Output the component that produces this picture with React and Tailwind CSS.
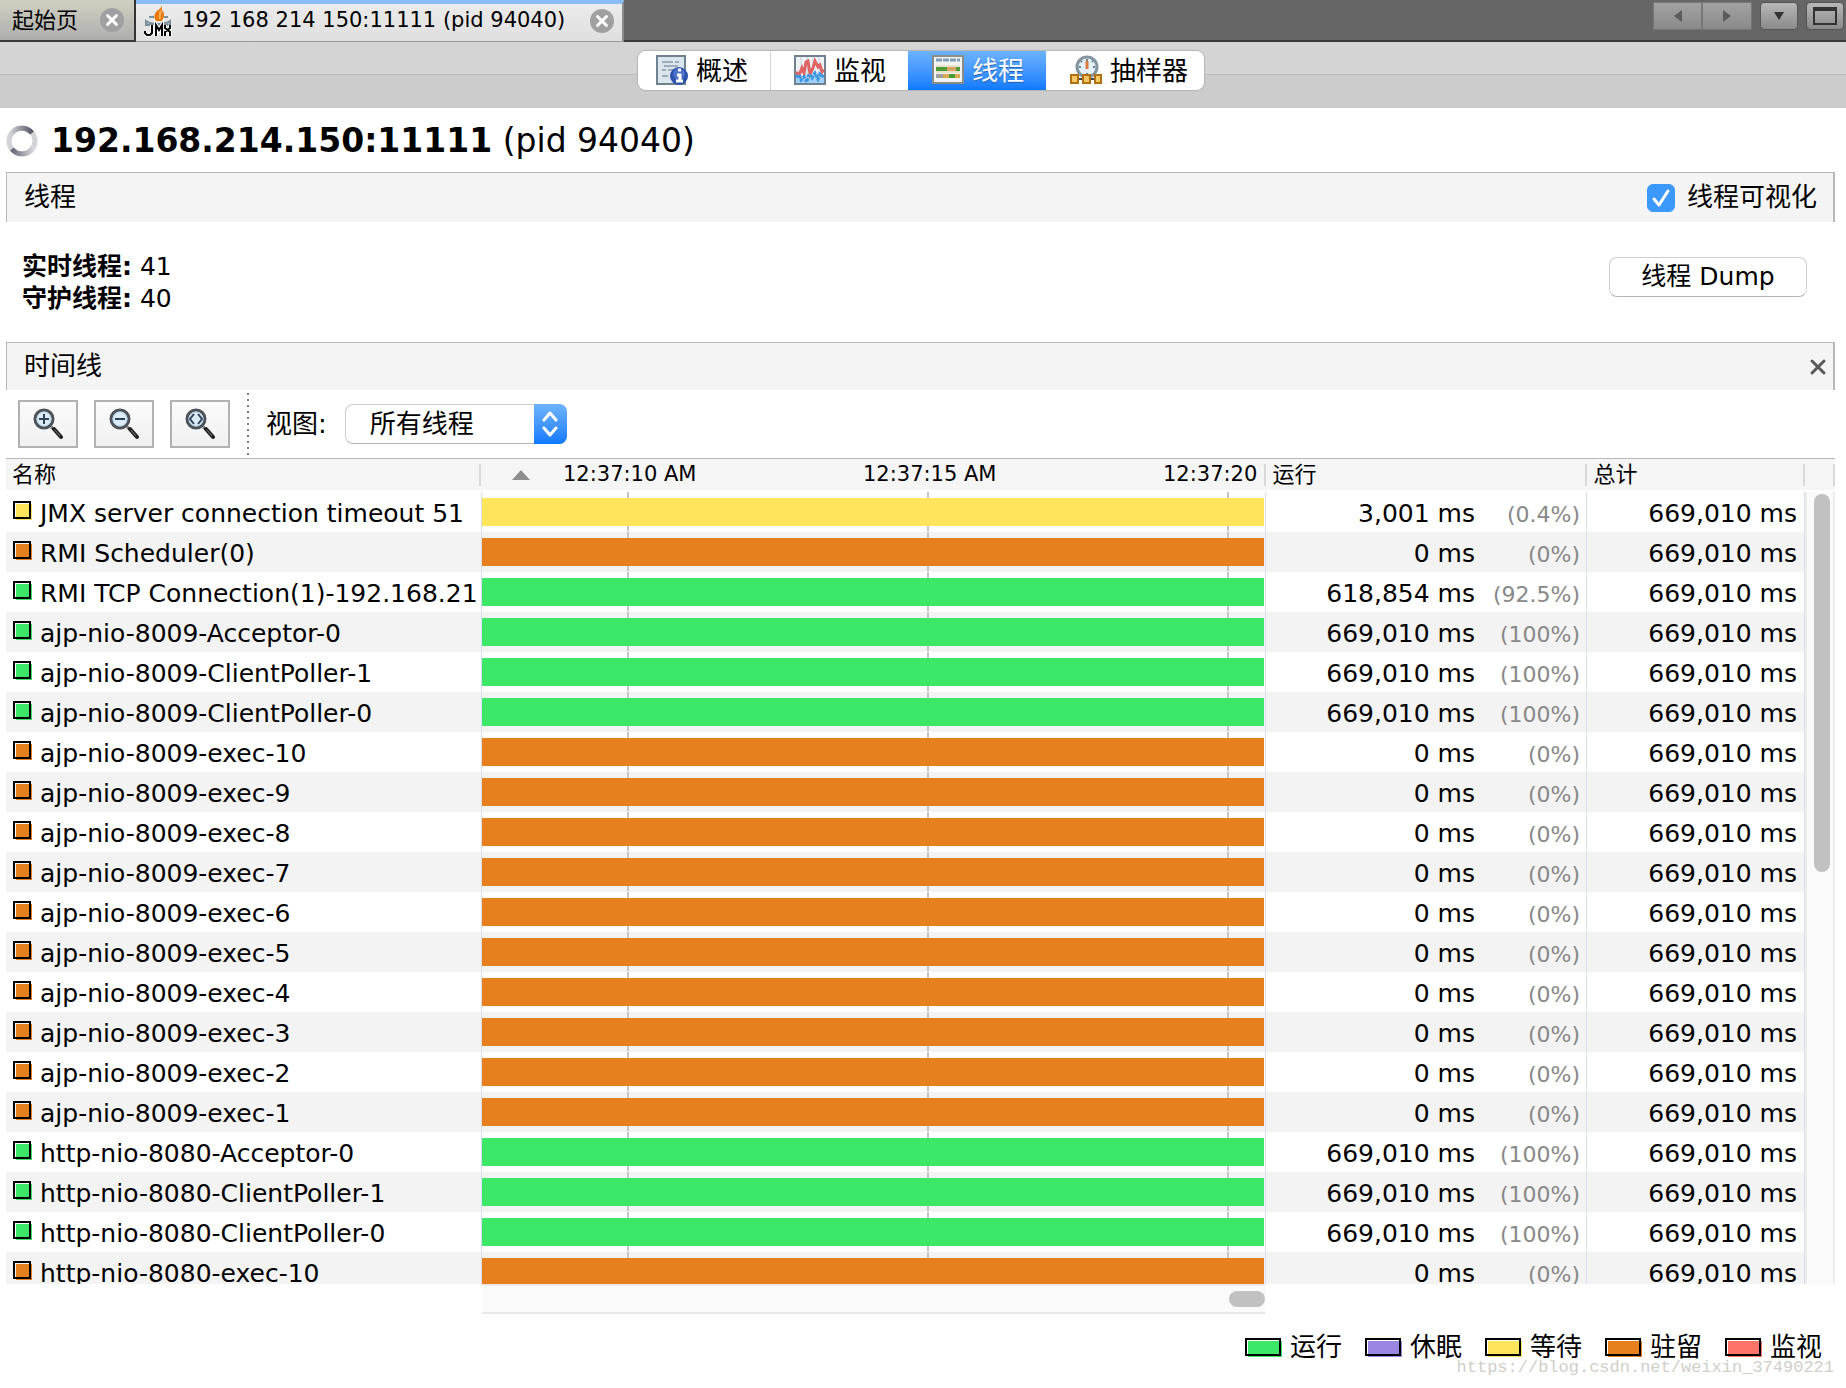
import React, { useState } from 'react';
import { X } from 'lucide-react';

const TOTAL = '669,010 ms';

const STATES = {
  running: { label: '运行', color: '#3ce667' },
  sleeping: { label: '休眠', color: '#9a86e0' },
  wait: { label: '等待', color: '#ffe45c' },
  park: { label: '驻留', color: '#e6801e' },
  monitor: { label: '监视', color: '#ff7369' },
};

const threads = [
  { name: 'JMX server connection timeout 51', state: 'wait', running: '3,001 ms', percent: '(0.4%)' },
  { name: 'RMI Scheduler(0)', state: 'park', running: '0 ms', percent: '(0%)' },
  { name: 'RMI TCP Connection(1)-192.168.21', state: 'running', running: '618,854 ms', percent: '(92.5%)' },
  { name: 'ajp-nio-8009-Acceptor-0', state: 'running', running: TOTAL, percent: '(100%)' },
  { name: 'ajp-nio-8009-ClientPoller-1', state: 'running', running: TOTAL, percent: '(100%)' },
  { name: 'ajp-nio-8009-ClientPoller-0', state: 'running', running: TOTAL, percent: '(100%)' },
  ...[10, 9, 8, 7, 6, 5, 4, 3, 2, 1].map((n) => ({
    name: `ajp-nio-8009-exec-${n}`,
    state: 'park',
    running: '0 ms',
    percent: '(0%)',
  })),
  { name: 'http-nio-8080-Acceptor-0', state: 'running', running: TOTAL, percent: '(100%)' },
  { name: 'http-nio-8080-ClientPoller-1', state: 'running', running: TOTAL, percent: '(100%)' },
  { name: 'http-nio-8080-ClientPoller-0', state: 'running', running: TOTAL, percent: '(100%)' },
  { name: 'http-nio-8080-exec-10', state: 'park', running: '0 ms', percent: '(0%)' },
];

// Coloured box with a shifted fill, used in the table and in the legend
const Swatch = ({ color, width }) => (
  <svg className="shrink-0" width={width + 1} height="19" viewBox={`0 0 ${width + 1} 19`}>
    <rect x="3" y="3" width={width - 2} height="16" fill={color} />
    <rect x="1" y="1" width={width - 2} height="16" fill="none" stroke="#000" strokeWidth="2" />
  </svg>
);

const TabClose = () => (
  <button aria-label="关闭" className="flex size-6 shrink-0 items-center justify-center rounded-full bg-[#a0a0a0]">
    <X size={18} strokeWidth={4} color="#fff" />
  </button>
);

const JmxIcon = () => (
  <svg width="28" height="32" viewBox="0 0 28 32" className="shrink-0">
    <path d="M17 0c1 3-2 4-4 6-3 3-3 5-2 10h7c3-4 2-7 1-11-1 2-1 2-1 3-1-3 1-5-1-8z" fill="#e8780c" />
    <path d="M16 6c1 3-1 5 0 8" stroke="#ffb45b" strokeWidth="2" fill="none" />
    <path d="M5 12h5M20 12h4" stroke="#7b929e" strokeWidth="2" />
    <path d="M2 16c5 4 19 4 24 0v4H2z" stroke="#7b929e" strokeWidth="2" fill="#b8c8d0" />
    <path
      d="M8 20v8l-2 2H3l-2-2v-2M12 31V20l3 5 3-5v11M21 20v3l5 4v4M26 20v3l-5 4v4"
      stroke="#fff" strokeWidth="4" fill="none"
    />
    <path
      d="M8 20v8l-2 2H3l-2-2v-2M12 31V20l3 5 3-5v11M21 20v3l5 4v4M26 20v3l-5 4v4"
      stroke="#000" strokeWidth="2" fill="none"
    />
  </svg>
);

const OverviewIcon = () => (
  <svg width="32" height="32" viewBox="0 0 32 32">
    <rect x="1" y="1" width="28" height="28" fill="#dbe5ee" stroke="#70818f" strokeWidth="2" />
    <path d="M6 7h11M19 7h4M8 11h14M6 15h4M12 15h6M6 21h6" stroke="#9fadba" strokeWidth="2" />
    <circle cx="23" cy="21" r="9" fill="#2c52ae" />
    <circle cx="23" cy="19" r="6" fill="#4a70c8" />
    <path d="M21 20h3v6M20 26h7M22 15h3" stroke="#fff" strokeWidth="3" fill="none" />
  </svg>
);

const MonitorIcon = () => (
  <svg width="32" height="32" viewBox="0 0 32 32">
    <rect x="1" y="1" width="30" height="28" fill="#f0f3f6" stroke="#70818f" strokeWidth="2" />
    <path d="M7 2v26M13 2v26M19 2v26M25 2v26" stroke="#c7d0d8" strokeWidth="1" />
    <path d="M2 20l3-4 3 5 3-3 4 6 4-7 3 3 3-4 5 5v7H2z" fill="#9fd0f8" />
    <path d="M2 17l3 3 3-7 2 5 2-11 2-1 2 13 3-6 2-7 3 6 2-2 2 7 2-2" stroke="#e06464" strokeWidth="3" fill="none" />
    <path d="M2 22l3-2 2 5 3-3 3 5 2-8 3 4 3-5 3 6 2-5 4 3" stroke="#3d94de" strokeWidth="3" strokeDasharray="3 1" fill="none" />
  </svg>
);

const ThreadsIcon = () => (
  <svg width="32" height="32" viewBox="0 0 32 32">
    <rect x="1" y="1" width="30" height="27" fill="#f3f3f3" stroke="#8b8b88" strokeWidth="2" />
    <path d="M4 5h24" stroke="#7f9db5" strokeWidth="3" strokeDasharray="6 1" />
    <path d="M4 14h15M24 14h4" stroke="#4d9a36" strokeWidth="4" />
    <path d="M15 14h9" stroke="#dba263" strokeWidth="4" />
    <path d="M4 11h24M4 17h24" stroke="#d8d3a0" strokeWidth="1" />
    <path d="M4 21h8" stroke="#a0a0a0" strokeWidth="4" />
    <path d="M11 21h6M23 21h5" stroke="#d8a94e" strokeWidth="4" />
    <path d="M17 21h6" stroke="#4d9a36" strokeWidth="4" />
  </svg>
);

const SamplerIcon = () => (
  <svg width="32" height="32" viewBox="0 0 32 32">
    <circle cx="17" cy="12" r="10" fill="#e4f0f8" stroke="#8595a0" strokeWidth="3" />
    <path d="M17 4v2M17 18v2M9 12h2M23 12h2M11 6l1 1M23 6l-1 1" stroke="#6d7f8c" strokeWidth="2" />
    <path d="M17 6v8" stroke="#e07a3c" strokeWidth="3" />
    <path d="M8 24h18" stroke="#444" strokeWidth="2" />
    <g fill="#f5c766" stroke="#b0710e" strokeWidth="2">
      <rect x="1" y="20" width="7" height="8" />
      <rect x="13" y="20" width="7" height="8" />
      <rect x="25" y="20" width="6" height="8" />
    </g>
  </svg>
);

const ZoomIcon = ({ children }) => (
  <svg width="30" height="32" viewBox="0 0 30 32">
    <path d="M18 19l4 3" stroke="#777" strokeWidth="3" />
    <path d="M21 21l7 8" stroke="#222" strokeWidth="4" strokeLinecap="round" />
    <path d="M22 22l5 6" stroke="#777" strokeWidth="1" />
    <circle cx="11" cy="11" r="9" fill="#dcebf8" stroke="#4c5257" strokeWidth="3" />
    <circle cx="11" cy="11" r="7" fill="none" stroke="#b6d3ea" strokeWidth="1" />
    <g stroke="#2e4258" strokeWidth="2" fill="none">{children}</g>
  </svg>
);

const zoomButtons = [
  { label: '放大', icon: <path d="M6 11h10M11 6v10" /> },
  { label: '缩小', icon: <path d="M6 11h10" /> },
  { label: '适合窗口', icon: <path d="M9 6l-4 5 4 5M13 6l4 5-4 5" /> },
];

const views = [
  { id: 'overview', label: '概述', icon: <OverviewIcon />, box: 'w-[132px] pl-[18px] rounded-l-lg' },
  { id: 'monitor', label: '监视', icon: <MonitorIcon />, box: 'w-[138px] pl-[23px] border-l border-[#d4d4d4]' },
  { id: 'threads', label: '线程', icon: <ThreadsIcon />, box: 'w-[138px] pl-6' },
  { id: 'sampler', label: '抽样器', icon: <SamplerIcon />, box: 'w-[158px] pl-6 rounded-r-lg' },
];

const TabBar = () => (
  <div className="flex h-[42px] bg-[#666] border-b-2 border-[#3a3a3a] text-[22px] shrink-0">
    <div className="flex w-[136px] items-center justify-between border-r-2 border-[#333] bg-linear-to-b from-[#d0d0c2] to-[#aeaeae] pl-3 pr-[10px]">
      <span>起始页</span>
      <TabClose />
    </div>
    <div className="-mb-[2px] flex w-[488px] items-center border-t-4 border-r-2 border-t-[#8bbcf8] border-r-[#8a8a8a] border-b border-b-[#999] bg-linear-to-b from-[#ebebeb] to-[#dfdfdf] px-2 pb-[3px]">
      <JmxIcon />
      <span className="ml-[10px] flex-1 whitespace-nowrap text-[21px]">192 168 214 150:11111 (pid 94040)</span>
      <TabClose />
    </div>
    <div className="ml-auto flex items-start pt-[2px] pr-[2px]">
      <button aria-label="向左" className="flex h-7 w-[49px] items-center justify-center border border-[#777] bg-linear-to-b from-[#a2a2a2] to-[#8a8a8a]">
        <svg width="8" height="12" viewBox="0 0 8 12"><path d="M8 0v12L0 6z" fill="#5c5c5c" /></svg>
      </button>
      <button aria-label="向右" className="flex h-7 w-[50px] items-center justify-center border border-[#777] bg-linear-to-b from-[#a2a2a2] to-[#8a8a8a]">
        <svg width="8" height="12" viewBox="0 0 8 12"><path d="M0 0v12l8-6z" fill="#5c5c5c" /></svg>
      </button>
      <button aria-label="列表" className="ml-2 flex h-7 w-[38px] items-center justify-center rounded-sm border border-[#555] bg-linear-to-b from-[#b8b8b8] to-[#8a8a8a]">
        <svg width="10" height="8" viewBox="0 0 10 8"><path d="M0 0h10L5 8z" fill="#333" /></svg>
      </button>
      <button aria-label="最大化" className="ml-2 flex h-7 w-[38px] items-center justify-center rounded-sm border border-[#555] bg-linear-to-b from-[#b8b8b8] to-[#8a8a8a]">
        <svg width="24" height="18" viewBox="0 0 24 18">
          <path d="M1 2h22v15H1z" fill="none" stroke="#333" strokeWidth="2" />
          <path d="M0 2h24" stroke="#333" strokeWidth="4" />
        </svg>
      </button>
    </div>
  </div>
);

const ViewSwitcher = ({ active, onChange }) => (
  <div className="flex h-[66px] shrink-0 justify-center bg-[linear-gradient(#d4d4d4_0_32px,#bcbcbc_32px_33px,#cccccc_33px)] pt-[9px] pr-1">
    <div className="flex h-[39px] rounded-lg shadow-[0_0_1px_1px_#b4b4b4]">
      {views.map((view) => (
        <button
          key={view.id}
          onClick={() => onChange(view.id)}
          className={`flex items-center gap-2 whitespace-nowrap pt-px text-[26px] ${view.box} ${
            view.id === active
              ? 'bg-linear-to-b from-[#6db3fb] to-[#0a7aff] text-white text-shadow-[0_1px_1px_#1f5fae]'
              : 'bg-white'
          }`}
        >
          {view.icon}
          {view.label}
        </button>
      ))}
    </div>
  </div>
);

const ColumnHead = ({ children, className = '' }) => (
  <th scope="col" className="p-0 pb-[2px] font-normal">
    <div className="flex h-[31px] items-center bg-[#f5f5f5]">
      <div className={`flex min-w-0 flex-1 items-center overflow-hidden whitespace-nowrap ${className}`}>{children}</div>
      <span className="h-[22px] w-[2px] shrink-0 bg-[#d9d9d9]" />
    </div>
  </th>
);

const ThreadTable = () => (
  <div className="flex min-h-0 flex-1 overflow-hidden border-t border-[#b8b8b8]">
    <div className="min-w-0 flex-1">
      <table className="w-full table-fixed border-collapse">
        <colgroup>
          <col className="w-[475px]" />
          <col />
          <col className="w-[321px]" />
          <col className="w-[218px]" />
        </colgroup>
        <thead>
          <tr className="h-[33px] text-left text-[22px]">
            <ColumnHead className="pl-[6px]">名称</ColumnHead>
            <ColumnHead className="text-[21px]">
              <span className="w-[82px] shrink-0 pl-[31px]">
                <svg width="18" height="10" viewBox="0 0 18 10"><path d="M0 10L9 0l9 10z" fill="#8e8e8e" /></svg>
              </span>
              <span className="w-[300px] shrink-0">12:37:10 AM</span>
              <span className="w-[300px] shrink-0">12:37:15 AM</span>
              <span className="shrink-0">12:37:20 AM</span>
            </ColumnHead>
            <ColumnHead className="pl-[7px]">运行</ColumnHead>
            <ColumnHead className="pl-[7px]">总计</ColumnHead>
          </tr>
        </thead>
        <tbody>
          {threads.map((thread) => (
            <tr key={thread.name} className="h-10 text-[25px] leading-10 even:bg-[#f3f3f3]">
              <td className="border-r border-[#d8deef] p-0">
                <div className="flex h-10 items-start gap-2 overflow-hidden whitespace-nowrap pl-[7px]">
                  <span className="pt-[9px]"><Swatch color={STATES[thread.state].color} width={18} /></span>
                  <span className="pt-[2px]">{thread.name}</span>
                </div>
              </td>
              <td className="border-r border-[#d8deef] p-0">
                <div className="relative h-10 py-[6px] pr-px">
                  <div className="absolute inset-0 flex gap-[298px] overflow-hidden pl-[145px]">
                    <span className="h-[39px] w-[2px] shrink-0 bg-[#c6c6c6]" />
                    <span className="h-[39px] w-[2px] shrink-0 bg-[#c6c6c6]" />
                    <span className="h-[39px] w-[2px] shrink-0 bg-[#c6c6c6]" />
                  </div>
                  <div className="relative h-7" style={{ backgroundColor: STATES[thread.state].color }} />
                </div>
              </td>
              <td className="border-r border-[#d8deef] p-0">
                <div className="flex h-10 items-baseline justify-end whitespace-nowrap pt-[2px] pr-[6px]">
                  <span>{thread.running}</span>
                  <span className="w-[105px] text-right text-[22px] text-[#888]">{thread.percent}</span>
                </div>
              </td>
              <td className="border-r border-[#d8deef] p-0">
                <div className="h-10 whitespace-nowrap pt-[2px] pr-[7px] text-right">{TOTAL}</div>
              </td>
            </tr>
          ))}
        </tbody>
      </table>
    </div>
    <div className="flex w-[30px] shrink-0 flex-col">
      <div className="mb-[2px] flex h-[31px] shrink-0 items-center justify-end bg-[#f5f5f5]">
        <span className="h-[22px] w-[2px] bg-[#d9d9d9]" />
      </div>
      <div className="flex-1 border-x-2 border-[#ececec] bg-[#fafafa] px-[7px] pt-[2px]">
        <div className="h-[378px] w-4 rounded-full bg-[#c1c1c1]" />
      </div>
    </div>
  </div>
);

const App = () => {
  const [view, setView] = useState('threads');
  const [visualization, setVisualization] = useState(true);

  return (
    <div className="relative flex h-screen flex-col overflow-hidden bg-white font-['DejaVu_Sans','Noto_Sans_CJK_SC',sans-serif] text-black">
      <TabBar />
      <ViewSwitcher active={view} onChange={setView} />

      <main className="flex min-h-0 flex-1 flex-col pl-[6px] pr-[11px]">
        <header className="flex h-16 shrink-0 items-center gap-[13px] pt-[2px]">
          <svg width="32" height="32" viewBox="0 0 32 32">
            <defs>
              <linearGradient id="ringTop" x1="0" x2="1">
                <stop offset="0" stopColor="#d4d5d9" />
                <stop offset="1" stopColor="#555766" />
              </linearGradient>
              <linearGradient id="ringBottom" x1="1" x2="0">
                <stop offset="0" stopColor="#dcdce0" />
                <stop offset="1" stopColor="#666876" />
              </linearGradient>
            </defs>
            <circle cx="16" cy="16" r="13" fill="none" stroke="#d2d3d7" strokeWidth="5" />
            <path d="M4 11A13 13 0 0 1 26 8" fill="none" stroke="url(#ringTop)" strokeWidth="5" />
            <path d="M28 21A13 13 0 0 1 6 24" fill="none" stroke="url(#ringBottom)" strokeWidth="5" />
          </svg>
          <h1 className="whitespace-nowrap text-[33px]">
            <b>192.168.214.150:11111</b> (pid 94040)
          </h1>
        </header>

        <div className="flex h-[50px] shrink-0 items-center justify-between border-t border-l border-r-2 border-[#b8b8b8] bg-[#f4f4f4] pl-[17px] pr-4 text-[26px]">
          <h2>线程</h2>
          <label className="flex items-center gap-3">
            <span className="relative size-7">
              <input
                type="checkbox"
                checked={visualization}
                onChange={(e) => setVisualization(e.target.checked)}
                className="block size-7 appearance-none rounded-md border border-[#c0c0c0] bg-white checked:border-[#3b99fc] checked:bg-[#3b99fc]"
              />
              {visualization && (
                <svg className="pointer-events-none absolute inset-0" width="28" height="28" viewBox="0 0 28 28">
                  <path d="M7 15l5 6 9-14" fill="none" stroke="#fff" strokeWidth="3" strokeLinecap="round" strokeLinejoin="round" />
                </svg>
              )}
            </span>
            线程可视化
          </label>
        </div>

        <div className="flex h-[120px] shrink-0 items-center justify-between pl-4 pr-7">
          <div className="pt-[2px] text-[25px] leading-8">
            <p><b>实时线程:</b> 41</p>
            <p><b>守护线程:</b> 40</p>
          </div>
          <button className="mb-[10px] h-10 w-[198px] rounded-lg border border-[#cfcfcf] border-b-[#b4b4b4] bg-white text-[25px] leading-9">
            线程 Dump
          </button>
        </div>

        <div className="flex h-12 shrink-0 items-center justify-between border-t border-l border-r-2 border-[#b8b8b8] bg-[#f4f4f4] pl-[17px] pr-[3px] text-[26px]">
          <h2>时间线</h2>
          <button aria-label="关闭">
            <X size={24} strokeWidth={3} color="#5a5a5a" />
          </button>
        </div>

        <div className="flex h-[68px] shrink-0 items-center pl-3">
          <div className="flex gap-4">
            {zoomButtons.map((button) => (
              <button
                key={button.label}
                aria-label={button.label}
                className="flex h-12 w-[60px] items-center justify-center border-2 border-[#b2b2b2] bg-linear-to-b from-[#fbfbfb] to-[#f0f0f0]"
              >
                <ZoomIcon>{button.icon}</ZoomIcon>
              </button>
            ))}
          </div>
          <span className="ml-[17px] h-[62px] w-[2px] bg-[repeating-linear-gradient(#7a7a7a_0_2px,transparent_2px_6px)]" />
          <label htmlFor="view" className="ml-[17px] text-[26px]">视图:</label>
          <div className="relative ml-[18px] h-10 w-[222px]">
            <select
              id="view"
              className="h-10 w-full appearance-none rounded-lg border border-[#cfcfcf] border-b-[#b4b4b4] bg-white pl-6 text-[26px] leading-9"
            >
              <option>所有线程</option>
            </select>
            <span className="pointer-events-none absolute inset-y-0 right-0 flex w-[33px] items-center justify-center rounded-r-lg bg-linear-to-b from-[#6db3fb] to-[#0a7aff]">
              <svg width="16" height="26" viewBox="0 0 16 26">
                <path d="M2 9l6-7 6 7M2 17l6 7 6-7" fill="none" stroke="#fff" strokeWidth="3" strokeLinecap="round" strokeLinejoin="round" />
              </svg>
            </span>
          </div>
        </div>

        <ThreadTable />

        <div className="mr-[570px] ml-[476px] flex h-[30px] shrink-0 items-center justify-end border-y-2 border-[#e9e9e9] bg-[#fafafa]">
          <div className="h-4 w-9 rounded-full bg-[#c1c1c1]" />
        </div>

        <ul className="flex h-[74px] shrink-0 justify-end gap-[23px] pt-[15px] pr-[13px] text-[26px] leading-9">
          {Object.values(STATES).map((state) => (
            <li key={state.label} className="flex h-9 items-center gap-2">
              <Swatch color={state.color} width={36} />
              {state.label}
            </li>
          ))}
        </ul>
      </main>

      <span className="absolute right-3 bottom-2 font-['Liberation_Mono',monospace] text-[17px] text-[#cfcfc8]">
        https://blog.csdn.net/weixin_37490221
      </span>
    </div>
  );
};

export default App;
